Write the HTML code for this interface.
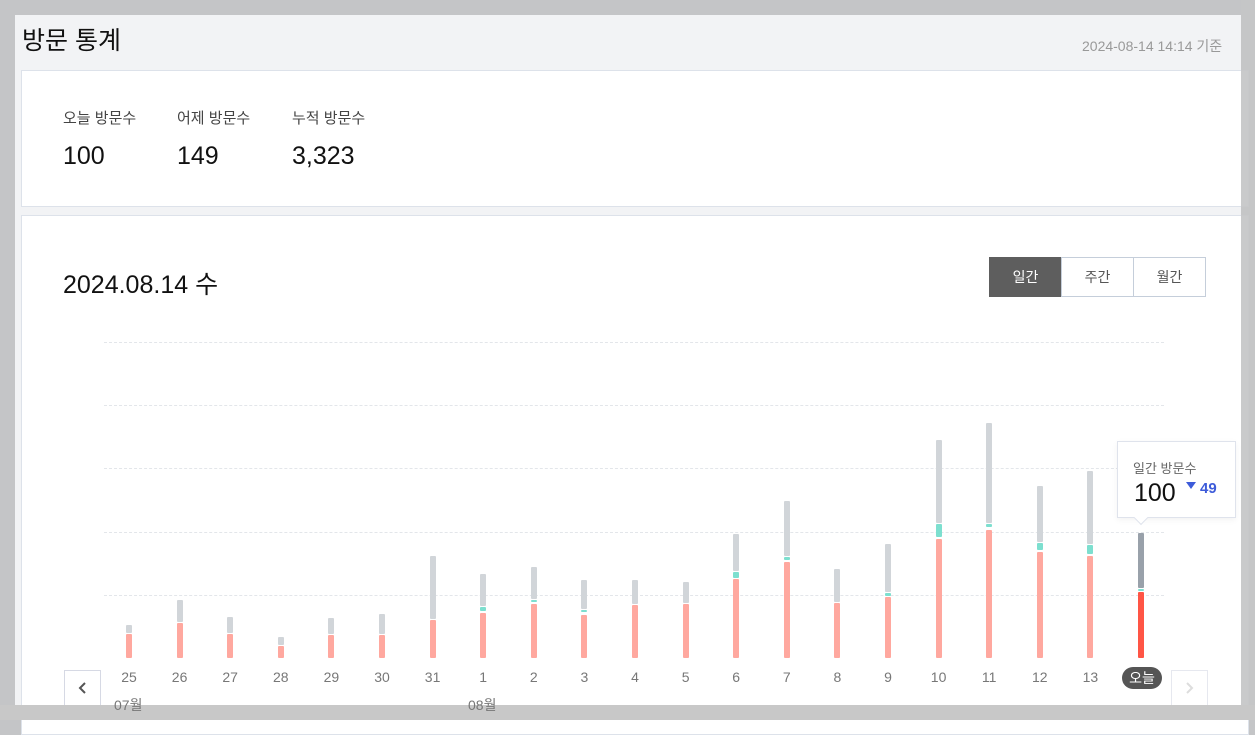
<!DOCTYPE html>
<html><head><meta charset="utf-8"><style>
*{margin:0;padding:0;box-sizing:border-box}
body{width:1255px;height:720px;overflow:hidden;background:#c4c5c7;font-family:"Liberation Sans","Noto Sans CJK KR",sans-serif;position:relative}
.a{position:absolute}
.page{left:15px;top:15px;width:1226px;height:690px;background:#f2f3f5}
.card{background:#fff;border:1px solid #dde2ea}
.lbl{font-size:15px;color:#444;top:107px}
.num{font-size:25px;color:#111;top:142px}
.grid{left:104px;width:1060px;border-top:1px dashed #e3e6ea;height:0}
.bar{width:6px;border-radius:1px}
.g{background:#d1d5d9}.t{background:#7ddfcf}.r{background:#ffa89f}
.d{font-size:14px;color:#777;top:669px;width:40px;text-align:center}
.btn{top:257px;height:40px;width:73px;font-size:14px;text-align:center;line-height:38px;border:1px solid #c5ceda;background:#fff;color:#555}
</style></head><body>
<div class="a page"></div>
<div class="a" style="left:22px;top:21px;font-size:25px;color:#111">방문 통계</div>
<div class="a" style="left:1082px;top:36px;font-size:14px;color:#999">2024-08-14 14:14 기준</div>
<div class="a card" style="left:21px;top:70px;width:1228px;height:137px"></div>
<div class="a lbl" style="left:63px">오늘 방문수</div>
<div class="a lbl" style="left:177px">어제 방문수</div>
<div class="a lbl" style="left:292px">누적 방문수</div>
<div class="a num" style="left:63px">100</div>
<div class="a num" style="left:177px">149</div>
<div class="a num" style="left:292px">3,323</div>
<div class="a card" style="left:21px;top:215px;width:1228px;height:520px"></div>
<div class="a" style="left:63px;top:265px;font-size:25px;color:#111">2024.08.14 수</div>
<div class="a btn" style="left:989px;background:#5e5e5e;color:#fff;border-color:#5e5e5e">일간</div>
<div class="a btn" style="left:1061px">주간</div>
<div class="a btn" style="left:1133px">월간</div>
<div class="a grid" style="top:342px"></div>
<div class="a grid" style="top:405px"></div>
<div class="a grid" style="top:468px"></div>
<div class="a grid" style="top:532px"></div>
<div class="a grid" style="top:595px"></div>
<div id="bars"></div>
<script>
var data=[[25,625,0,0,634],[26,600,0,0,623],[27,617,0,0,634],[28,637,0,0,646],[29,618,0,0,635],[30,614,0,0,635],[31,556,0,0,620],[1,574,607,611,613],[2,567,600,602,604],[3,580,610,612,615],[4,580,0,0,605],[5,582,0,0,604],[6,534,572,578,579],[7,501,557,560,562],[8,569,0,0,603],[9,544,593,596,597],[10,440,524,537,539],[11,423,524,527,530],[12,486,543,550,552],[13,471,545,554,556]];
var h='';
data.forEach(function(d,i){var x=126+i*50.6;var gb=d[2]?d[2]-1:d[4]-1;
h+='<div class="a bar g" style="left:'+x+'px;top:'+d[1]+'px;height:'+(gb-d[1])+'px"></div>';
if(d[2])h+='<div class="a bar t" style="left:'+x+'px;top:'+d[2]+'px;height:'+(d[3]-d[2])+'px"></div>';
h+='<div class="a bar r" style="left:'+x+'px;top:'+d[4]+'px;height:'+(658-d[4])+'px"></div>';
h+='<div class="a d" style="left:'+(x-17)+'px">'+d[0]+'</div>';});
document.getElementById('bars').innerHTML=h;
</script>
<div class="a bar" style="left:1138px;top:533px;height:55px;background:#99a1aa"></div>
<div class="a bar t" style="left:1138px;top:589px;height:2px"></div>
<div class="a bar" style="left:1138px;top:592px;height:66px;background:#ff5545"></div>
<div class="a" style="left:1122px;top:667px;width:40px;height:22px;border-radius:11px;background:#555;color:#fff;font-size:14px;text-align:center;line-height:22px">오늘</div>
<div class="a" style="left:1117px;top:441px;width:119px;height:77px;background:#fff;border:1px solid #dfe3ec;box-shadow:0 2px 6px rgba(0,0,0,.05)"></div>
<div class="a" style="left:1136px;top:513px;width:10px;height:10px;background:#fff;border-right:1px solid #dfe3ec;border-bottom:1px solid #dfe3ec;transform:rotate(45deg)"></div>
<div class="a" style="left:1133px;top:458px;font-size:13px;color:#666">일간 방문수</div>
<div class="a" style="left:1134px;top:479px;font-size:25px;color:#111">100</div>
<div class="a" style="left:1186px;top:482px;width:0;height:0;border-left:5px solid transparent;border-right:5px solid transparent;border-top:7px solid #3d5bd9"></div>
<div class="a" style="left:1200px;top:480px;font-size:15px;color:#3d5bd9;font-weight:bold">49</div>
<div class="a" style="left:64px;top:670px;width:37px;height:37px;border:1px solid #d6d9e4;background:#fff"></div>
<svg class="a" style="left:76px;top:680px" width="14" height="16"><path d="M9 3L4 8L9 13" stroke="#555" stroke-width="2" fill="none"/></svg>
<div class="a" style="left:1171px;top:670px;width:37px;height:37px;border:1px solid #e6e8ef;background:#fff"></div>
<svg class="a" style="left:1182px;top:680px" width="14" height="16"><path d="M5 3L10 8L5 13" stroke="#ddd" stroke-width="2" fill="none"/></svg>
<div class="a" style="left:1241px;top:0;width:14px;height:720px;background:rgba(196,197,199,.92)"></div>
<div class="a" style="left:0;top:705px;width:1255px;height:15px;background:#c8c8c8"></div>
<div class="a" style="left:114px;top:695px;font-size:14px;color:#777">07월</div>
<div class="a" style="left:468px;top:695px;font-size:14px;color:#777">08월</div>
</body></html>
